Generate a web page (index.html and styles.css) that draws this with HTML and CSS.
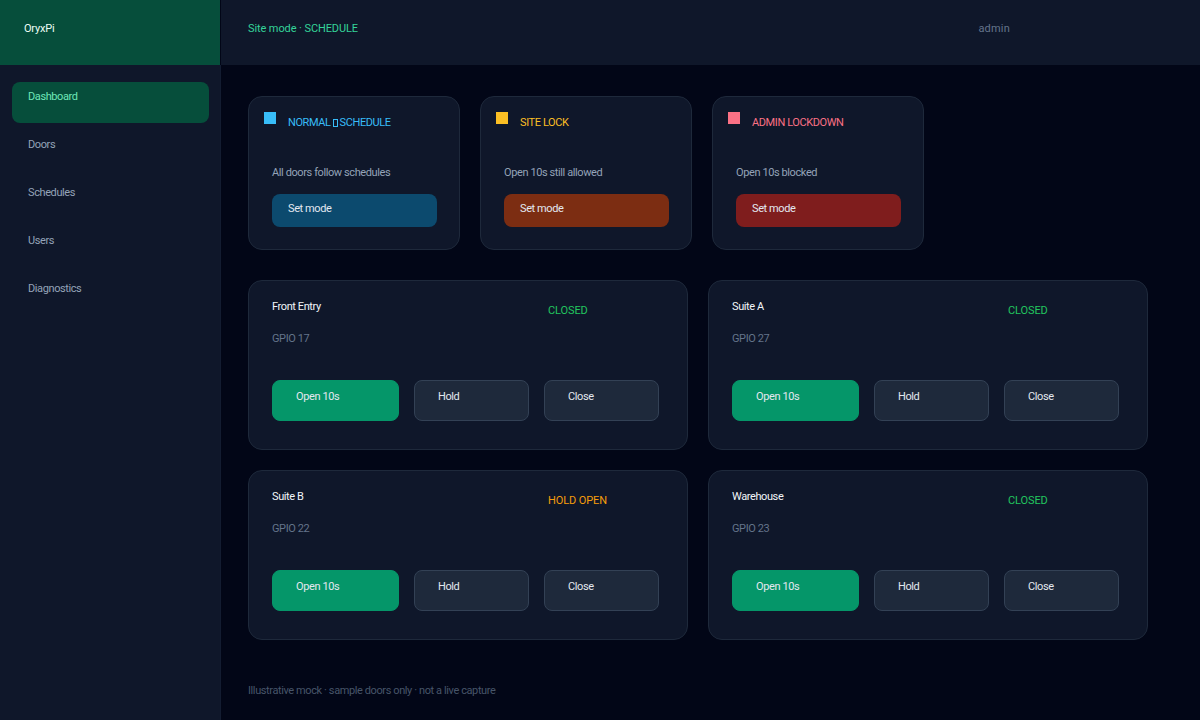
FILE: index.html
```html
<!DOCTYPE html>
<html lang="en">
<head>
    <meta charset="UTF-8">
    <meta name="viewport" content="width=device-width, initial-scale=1.0">
    <title>OryxPi</title>
    <link rel="stylesheet" href="styles.css">
</head>
<body>
    <div class="app">
        <div class="brand">OryxPi</div>

        <header class="topbar">
            <span class="site-mode">Site mode · SCHEDULE</span>
            <span class="user">admin</span>
        </header>

        <aside class="sidebar">
            <nav class="nav">
                <a class="nav-item active" href="#">Dashboard</a>
                <a class="nav-item" href="#">Doors</a>
                <a class="nav-item" href="#">Schedules</a>
                <a class="nav-item" href="#">Users</a>
                <a class="nav-item" href="#">Diagnostics</a>
            </nav>
        </aside>

        <main class="main">
            <!-- site modes -->
            <section class="mode-row">
                <div class="mode-card normal">
                    <div class="mode-head">
                        <span class="mode-dot"></span>
                        <span class="mode-title">NORMAL<span class="tofu"></span>SCHEDULE</span>
                    </div>
                    <div class="mode-body">
                        <p class="mode-desc">All doors follow schedules</p>
                        <button class="mode-btn">Set mode</button>
                    </div>
                </div>
                <div class="mode-card lock">
                    <div class="mode-head">
                        <span class="mode-dot"></span>
                        <span class="mode-title">SITE LOCK</span>
                    </div>
                    <div class="mode-body">
                        <p class="mode-desc">Open 10s still allowed</p>
                        <button class="mode-btn">Set mode</button>
                    </div>
                </div>
                <div class="mode-card lockdown">
                    <div class="mode-head">
                        <span class="mode-dot"></span>
                        <span class="mode-title">ADMIN LOCKDOWN</span>
                    </div>
                    <div class="mode-body">
                        <p class="mode-desc">Open 10s blocked</p>
                        <button class="mode-btn">Set mode</button>
                    </div>
                </div>
            </section>

            <!-- doors -->
            <section class="door-grid">
                <div class="door-card">
                    <div class="door-head">
                        <span class="door-name">Front Entry</span>
                        <span class="door-status closed">CLOSED</span>
                    </div>
                    <div class="door-gpio">GPIO 17</div>
                    <div class="door-actions">
                        <button class="btn btn-open">Open 10s</button>
                        <button class="btn">Hold</button>
                        <button class="btn">Close</button>
                    </div>
                </div>
                <div class="door-card">
                    <div class="door-head">
                        <span class="door-name">Suite A</span>
                        <span class="door-status closed">CLOSED</span>
                    </div>
                    <div class="door-gpio">GPIO 27</div>
                    <div class="door-actions">
                        <button class="btn btn-open">Open 10s</button>
                        <button class="btn">Hold</button>
                        <button class="btn">Close</button>
                    </div>
                </div>
                <div class="door-card">
                    <div class="door-head">
                        <span class="door-name">Suite B</span>
                        <span class="door-status held">HOLD OPEN</span>
                    </div>
                    <div class="door-gpio">GPIO 22</div>
                    <div class="door-actions">
                        <button class="btn btn-open">Open 10s</button>
                        <button class="btn">Hold</button>
                        <button class="btn">Close</button>
                    </div>
                </div>
                <div class="door-card">
                    <div class="door-head">
                        <span class="door-name">Warehouse</span>
                        <span class="door-status closed">CLOSED</span>
                    </div>
                    <div class="door-gpio">GPIO 23</div>
                    <div class="door-actions">
                        <button class="btn btn-open">Open 10s</button>
                        <button class="btn">Hold</button>
                        <button class="btn">Close</button>
                    </div>
                </div>
            </section>

            <p class="footnote">Illustrative mock · sample doors only · not a live capture</p>
        </main>
    </div>
</body>
</html>
```

FILE: styles.css
```css
* {
    margin: 0;
    padding: 0;
    box-sizing: border-box;
}

body {
    background: #020617;
    font-family: Roboto, 'Liberation Sans', sans-serif;
    font-size: 11px;
    line-height: 14px;
    letter-spacing: -0.4px;
    color: #e2e8f0;
}

button {
    font: inherit;
    letter-spacing: inherit;
    text-align: left;
    cursor: pointer;
}

.app {
    display: grid;
    grid-template-columns: 221px 1fr;
    grid-template-rows: 65px 1fr;
    min-height: 720px;
}

/* brand + top bar */
.brand {
    background: #064e3b;
    width: 220px;
    padding: 22px 24px 20px;
    color: #ecfdf5;
    letter-spacing: -0.2px;
}

.topbar {
    background: #0f172a;
    padding: 22px 190px 20px 27px;
    display: flex;
    justify-content: space-between;
}

.site-mode {
    color: #34d399;
    letter-spacing: -0.1px;
}

.user {
    color: #64748b;
    letter-spacing: 0.2px;
}

/* sidebar */
.sidebar {
    background: #0f172a;
    border-right: 1px solid #131c31;
}

.nav {
    display: flex;
    flex-direction: column;
    gap: 7px;
    padding: 17px 11px 0 12px;
}

.nav-item {
    display: block;
    height: 41px;
    padding: 8px 16px 0;
    border-radius: 8px;
    color: #94a3b8;
    text-decoration: none;
}

.nav-item.active {
    background: #064e3b;
    color: #6ee7b7;
}

/* main area */
.main {
    padding: 31px 0 0 27px;
}

.mode-row {
    display: flex;
    gap: 20px;
}

.mode-card {
    width: 212px;
    height: 154px;
    background: #0f172a;
    border: 1px solid #1e293b;
    border-radius: 14px;
    padding: 15px;
}

.mode-head {
    display: flex;
    gap: 12px;
}

.mode-dot {
    width: 12px;
    height: 12px;
    flex: none;
}

.mode-title {
    margin-top: 4px;
}

.tofu {
    display: inline-block;
    width: 5px;
    height: 8px;
    margin: 0 2px;
    border: 1px solid currentColor;
    vertical-align: -1px;
}

.mode-body {
    padding-left: 8px;
}

.mode-desc {
    margin-top: 36px;
    color: #94a3b8;
}

.mode-btn {
    display: block;
    width: 165px;
    height: 33px;
    margin-top: 14px;
    padding: 1px 16px 4px;
    border: none;
    border-radius: 8px;
    color: #e2e8f0;
}

.normal .mode-dot { background: #38bdf8; }
.normal .mode-title { color: #38bdf8; }
.normal .mode-btn { background: #0c4a6e; }

.lock .mode-dot { background: #fbbf24; }
.lock .mode-title { color: #fbbf24; }
.lock .mode-btn { background: #7c2d12; }

.lockdown .mode-dot { background: #fb7185; }
.lockdown .mode-title { color: #fb7185; }
.lockdown .mode-btn { background: #7f1d1d; }

/* door cards */
.door-grid {
    display: grid;
    grid-template-columns: 440px 440px;
    gap: 20px;
    margin-top: 30px;
}

.door-card {
    height: 170px;
    background: #0f172a;
    border: 1px solid #1e293b;
    border-radius: 14px;
    padding: 19px 23px 0;
}

.door-head {
    display: flex;
}

.door-name {
    width: 276px;
    color: #f1f5f9;
}

.door-status {
    margin-top: 4px;
    letter-spacing: -0.1px;
}

.door-status.closed { color: #22c55e; }
.door-status.held { color: #f59e0b; }

.door-gpio {
    margin-top: 14px;
    color: #64748b;
}

.door-actions {
    display: flex;
    gap: 15px;
    margin-top: 34px;
}

.btn {
    width: 115px;
    height: 41px;
    padding: 3px 23px 10px;
    background: #1e293b;
    border: 1px solid #334155;
    border-radius: 8px;
    color: #e2e8f0;
}

.btn-open {
    width: 127px;
    background: #059669;
    border-color: #059669;
}

.footnote {
    margin-top: 44px;
    color: #475569;
}
```
